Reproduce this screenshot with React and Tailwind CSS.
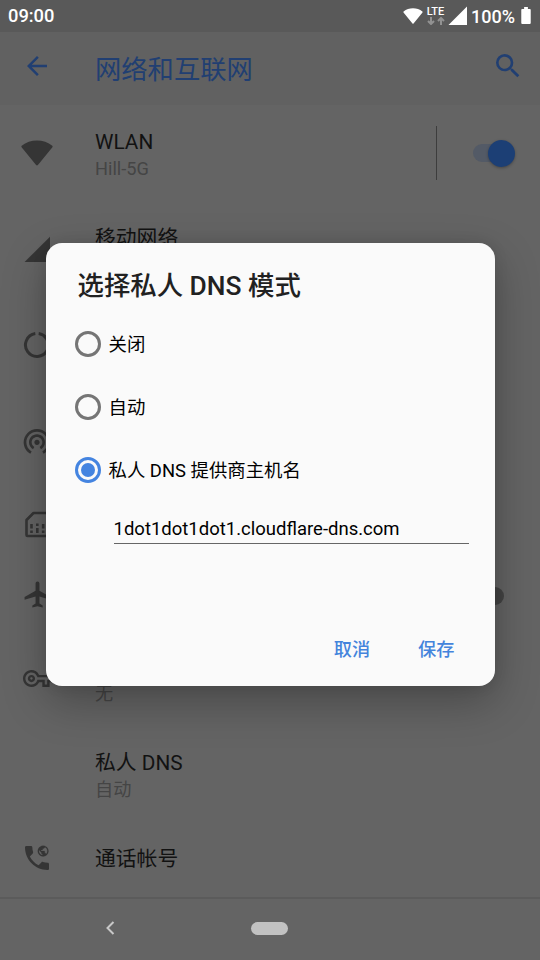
import React from "react";
import {
  MdArrowBack,
  MdSearch,
  MdWifiTethering,
  MdAirplanemodeActive,
  MdOutlineVpnKey,
} from "react-icons/md";

function WifiFan({ className }) {
  return (
    <svg viewBox="0 0 32 26" className={className} fill="currentColor">
      <path d="M.7 5.8C5 2.2 10.300 .4 16 .4s11 1.800 15.300 5.400c.5.4.5.9.1 1.400L16.900 25c-.5.6-1.300.6-1.800 0L.6 7.200c-.4-.5-.4-1 .1-1.400z" />
    </svg>
  );
}

function Triangle({ className }) {
  return (
    <svg viewBox="0 0 20 20" className={className} fill="currentColor">
      <path d="M20 .5V20H.5z" />
    </svg>
  );
}

function DataUsageIcon() {
  return (
    <svg viewBox="0 0 28 28" className="h-7 w-7" fill="none" stroke="currentColor" strokeWidth="3">
      <path d="M12.300 2.600A11.500 11.500 0 1 0 24.200 19.300M15.700 2.600A11.500 11.500 0 0 1 25.300 16" />
    </svg>
  );
}

function SimIcon() {
  return (
    <svg viewBox="0 0 28 28" className="h-7 w-7" fill="none" stroke="currentColor" strokeWidth="2.600">
      <path d="M10.500 2H24a1 1 0 0 1 1 1v21a1 1 0 0 1-1 1H4.500a1 1 0 0 1-1-1V9z" strokeLinejoin="round" />
      <path d="M8.500 13v4.500M8.500 19.500V22M14.300 12.500V15M14.300 17v5M20.200 13v4.500M20.200 19.500V22" />
    </svg>
  );
}

function PhoneGlobeIcon() {
  return (
    <svg viewBox="0 0 24 24" className="h-8 w-8" fill="currentColor">
      <path d="M6.620 10.790c1.440 2.830 3.760 5.140 6.590 6.590l2.200-2.200c.27-.27.67-.36 1.020-.24 1.120.37 2.330.57 3.570.57.55 0 1 .45 1 1V20c0 .55-.45 1-1 1-9.390 0-17-7.610-17-17 0-.55.45-1 1-1h3.500c.55 0 1 .45 1 1 0 1.250.2 2.450.57 3.570.11.350.03.740-.25 1.020z" />
      <g transform="translate(11.800 2) scale(.4)">
        <path d="M12 2C6.480 2 2 6.480 2 12s4.480 10 10 10 10-4.480 10-10S17.520 2 12 2zm-1 17.930c-3.950-.49-7-3.850-7-7.930 0-.62.080-1.210.21-1.790L9 15v1c0 1.100.9 2 2 2v1.930zm6.900-2.540c-.26-.81-1-1.390-1.900-1.390h-1v-3c0-.55-.45-1-1-1H8v-2h2c.55 0 1-.45 1-1V7h2c1.100 0 2-.9 2-2v-.41c2.930 1.190 5 4.060 5 7.410 0 2.080-.8 3.970-2.100 5.390z" stroke="currentColor" strokeWidth=".4" />
      </g>
    </svg>
  );
}

function StatusBar() {
  return (
    <div className="flex h-8 shrink-0 items-center bg-[#595959] pl-2 pr-[9px] text-lg font-medium text-white">
      <span className="flex-1 pt-px text-[18.300px]">09:00</span>
      <WifiFan className="h-4 w-5" />
      <div className="ml-[3px] flex w-[19px] flex-col items-center pb-px">
        <span className="text-[11px] leading-[10px]">LTE</span>
        <svg viewBox="0 0 18 8" className="h-2 w-[18px] text-[#929292]" fill="none" stroke="currentColor" strokeWidth="2">
          <path d="M4 0v7M1 4l3 3 3-3M14 8V1M11 4l3-3 3 3" />
        </svg>
      </div>
      <Triangle className="-mt-px ml-[2px] h-[19px] w-[21px]" />
      <span className="ml-[3px] w-[45px] whitespace-nowrap pt-px text-lg">100%</span>
      <svg viewBox="0 0 10 18" className="-mt-px ml-[5px] h-[17px] w-[10px]" fill="currentColor">
        <path d="M3 0h4v2h2q1 0 1 1v14q0 1-1 1H1q-1 0-1-1V3q0-1 1-1h2z" />
      </svg>
    </div>
  );
}

function Row({ height, icon, title, subtitle, children }) {
  return (
    <div className={`flex shrink-0 items-center ${height}`}>
      <div className="flex w-[95px] shrink-0 pl-[21px] text-[#353535]">
        <div className="flex w-8 justify-center">{icon}</div>
      </div>
      <div className="flex-1 pt-[2px]">
        <div className="h-[28px] text-[20.800px] leading-[29px] text-[#121212]">{title}</div>
        {subtitle !== undefined && (
          <div className="h-[25px] text-[18.200px] leading-[25px] text-[#454545]">{subtitle}</div>
        )}
      </div>
      {children}
    </div>
  );
}

function Radio({ label, checked }) {
  return (
    <div className="flex h-[63px] items-center pl-[29px]">
      <span
        className={`flex h-[26px] w-[26px] items-center justify-center rounded-full border-3 ${
          checked ? "border-[#4484e0]" : "border-[#757575]"
        }`}
      >
        {checked && <span className="h-[14px] w-[14px] rounded-full bg-[#4484e0]" />}
      </span>
      <span className="ml-2 pt-[2px] text-[18.400px] text-black">{label}</span>
    </div>
  );
}

function Dialog() {
  return (
    <div className="absolute left-[45.500px] top-[243px] flex h-[442.500px] w-[449px] flex-col rounded-[16px] bg-[#fafafa] shadow-[0_16px_44px_rgba(0,0,0,0.28),0_0_14px_rgba(0,0,0,0.1)]">
      <h2 className="h-[69px] pl-8 pt-[23px] text-[26.400px] font-medium leading-10 text-[#212121]">
        选择私人 DNS 模式
      </h2>
      <Radio label="关闭" />
      <Radio label="自动" />
      <Radio label="私人 DNS 提供商主机名" checked />
      <div className="ml-[68px] mr-[26px] mt-[10px] h-[33px] border-b border-[#666] text-[18.500px] leading-[36px] text-black">
        1dot1dot1dot1.cloudflare-dns.com
      </div>
      <div className="mt-auto flex h-[74px] justify-end gap-12 pr-10 text-[18.200px] font-medium leading-[76px] text-[#4484dc]">
        <span>取消</span>
        <span>保存</span>
      </div>
    </div>
  );
}

export default function App() {
  return (
    <div className="relative flex h-[960px] w-[540px] flex-col overflow-hidden bg-[#646464] font-[Roboto,'Noto_Sans_CJK_SC',sans-serif]">
      <StatusBar />
      <header className="flex h-[73px] shrink-0 items-center bg-[#616161] pl-[22px] pr-4 text-[#213f72]">
        <MdArrowBack className="-mt-[6px] h-[30px] w-[30px]" />
        <h1 className="ml-[43px] flex-1 pt-[2px] text-[26.300px] leading-10">网络和互联网</h1>
        <MdSearch className="-mt-[6px] h-8 w-8" />
      </header>
      <main className="flex flex-1 flex-col">
        <Row height="h-24" icon={<WifiFan className="h-[26px] w-8" />} title="WLAN" subtitle="Hill-5G">
          <span className="h-[54px] w-[1.500px] bg-[#3d3d3d]" />
          <div className="ml-9 mr-[25px] flex h-7 w-[42px] items-center">
            <span className="h-[18px] w-8 rounded-full bg-[#535a66]" />
            <span className="-ml-[17px] h-[27px] w-[27px] shrink-0 rounded-full bg-[#1c3f75] shadow-[0_1px_3px_rgba(0,0,0,0.3)]" />
          </div>
        </Row>
        <Row height="h-24" icon={<Triangle className="h-[26px] w-[26px]" />} title="移动网络" subtitle="" />
        <Row height="h-24" icon={<DataUsageIcon />} />
        <Row height="h-24" icon={<MdWifiTethering className="h-8 w-8" />} />
        <Row height="h-[72px]" icon={<SimIcon />} />
        <Row height="h-[69px]" icon={<MdAirplanemodeActive className="-mt-[2px] h-[31px] w-[31px]" />}>
          <span className="mr-9 h-[18px] w-[18px] rounded-full bg-[#444]" />
        </Row>
        <Row height="h-24" icon={<MdOutlineVpnKey className="h-[29px] w-[29px]" />} subtitle="无" />
        <Row height="h-24" title="私人 DNS" subtitle="自动" />
        <Row height="h-[72px]" icon={<PhoneGlobeIcon />} title="通话帐号" />
      </main>
      <nav className="flex h-[63px] shrink-0 items-center border-t-2 border-[#5b5b5b] pb-[3px] pl-[105px]">
        <svg viewBox="0 0 11 14" className="h-[14px] w-[11px]" fill="none" stroke="#c8c8c8" strokeWidth="2">
          <path d="M8.500 1 2.500 7l6 6" />
        </svg>
        <span className="ml-[135px] h-[13px] w-[37px] rounded-full bg-[#c2c2c2]" />
      </nav>
      <Dialog />
    </div>
  );
}
